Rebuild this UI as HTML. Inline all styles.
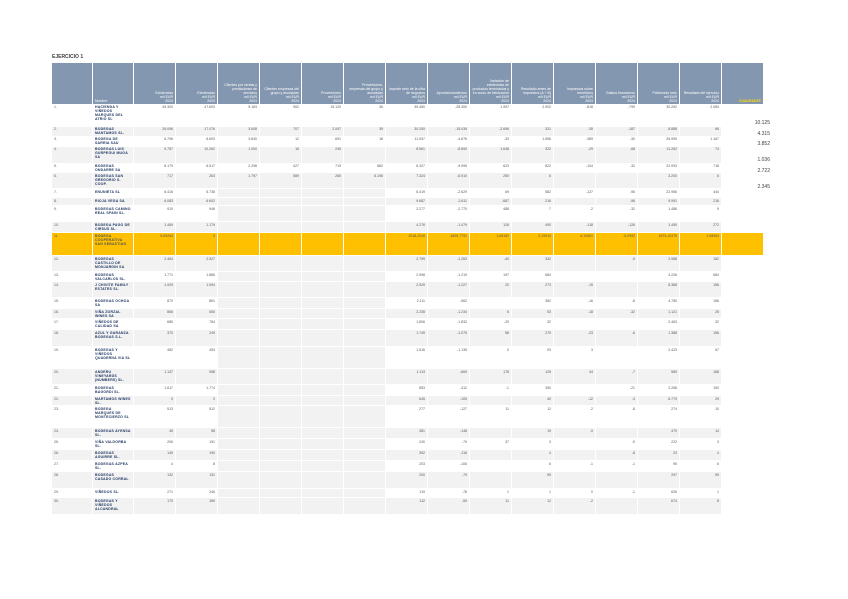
<!DOCTYPE html>
<html><head><meta charset="utf-8">
<style>
body{margin:0;background:#fff;width:848px;height:599px;overflow:hidden;position:relative;font-family:"Liberation Sans",sans-serif}
.t{position:absolute;left:52px;top:54px;font-size:5px;font-weight:bold;color:#404040}
table{position:absolute;left:51px;top:62px;border-collapse:collapse;table-layout:fixed;width:712px}
td,th{border:1px solid #fff;padding:0.5px 2px 0 2px;overflow:hidden;font-size:3.5px;line-height:4.1px;vertical-align:top;text-align:right;color:#595959;white-space:nowrap}
th{background:#8497b0;color:#fff;height:40px;vertical-align:bottom;font-weight:normal;white-space:normal;text-align:right;padding-bottom:0}
th.c{color:#ffd700;font-weight:bold}
td.n{text-align:left;color:#1f3864;font-weight:bold;white-space:normal;letter-spacing:.2px}
td.i{text-align:left}
tr.s td{background:#f2f2f2}
td.g{background:#f2f2f2}
tr.h td{background:#ffc000;color:#555}
tr.h td.n{color:#555}
.r{position:absolute;left:752px;font-size:5px;color:#404040;width:18px;text-align:right}
</style></head><body>
<div class="t">EJERCICIO 1</div>
<table>
<colgroup><col style="width:41px"><col style="width:41px"><col span="14" style="width:42px"><col style="width:42px"></colgroup>
<tr><th></th><th style="text-align:left">Nombre</th><th>Existencias<br>mil EUR<br>2024</th><th>Existencias<br>mil EUR<br>2023</th><th>Clientes por ventas y prestaciones de servicios<br>mil EUR<br>2024</th><th>Clientes empresas del grupo y asociadas<br>mil EUR<br>2024</th><th>Proveedores<br>mil EUR<br>2024</th><th>Proveedores, empresas del grupo y asociadas<br>mil EUR<br>2024</th><th>Importe neto de la cifra de negocios<br>mil EUR<br>2024</th><th>Aprovisionamientos<br>mil EUR<br>2024</th><th>Variación de existencias de productos terminados y en curso de fabricación<br>mil EUR<br>2024</th><th>Resultado antes de impuestos (A + B)<br>mil EUR<br>2024</th><th>Impuestos sobre beneficios<br>mil EUR<br>2024</th><th>Gastos financieros<br>mil EUR<br>2024</th><th>Patrimonio neto<br>mil EUR<br>2024</th><th>Resultado del ejercicio<br>mil EUR<br>2024</th><th class="c">CUADRANTE</th></tr>
<tr style="height:22px"><td class="i">1.</td><td class="n">HACIENDA Y VIÑEDOS MARQUES DEL ATRIO SL</td><td>49.300</td><td>47.603</td><td>9.163</td><td>962</td><td>15.120</td><td>36</td><td>39.460</td><td>-28.300</td><td>1.997</td><td>2.902</td><td>-818</td><td>-799</td><td>30.262</td><td>2.084</td><td></td></tr>
<tr class="s" style="height:10px"><td class="i">2.</td><td class="n">BODEGAS MANTAMOS SL.</td><td>26.096</td><td>17.076</td><td>3.608</td><td>707</td><td>2.097</td><td>39</td><td>30.200</td><td>-15.039</td><td>-2.696</td><td>321</td><td>-35</td><td>-187</td><td>8.888</td><td>66</td><td style="background:#fff"></td></tr>
<tr style="height:10px"><td class="i">3.</td><td class="n">BODEGA DE SARRIA SAU</td><td>6.796</td><td>6.603</td><td>3.840</td><td>12</td><td>691</td><td>18</td><td>11.097</td><td>-4.676</td><td>-33</td><td>1.556</td><td>-389</td><td>-30</td><td>26.990</td><td>1.167</td><td></td></tr>
<tr class="s" style="height:17px"><td class="i">4.</td><td class="n">BODEGAS LUIS GURPEGUI MUGA SA</td><td>9.757</td><td>10.262</td><td>1.000</td><td>16</td><td>245</td><td></td><td>8.561</td><td>-8.890</td><td>1.648</td><td>322</td><td>-29</td><td>-68</td><td>11.262</td><td>74</td><td style="background:#fff"></td></tr>
<tr style="height:9px"><td class="i">5.</td><td class="n">BODEGAS ONDARRE SA</td><td>8.179</td><td>6.517</td><td>2.298</td><td>427</td><td>719</td><td>882</td><td>6.327</td><td>-9.995</td><td>623</td><td>822</td><td>-104</td><td>-32</td><td>22.093</td><td>718</td><td></td></tr>
<tr class="s" style="height:16px"><td class="i">6.</td><td class="n">BODEGAS SAN GREGORIO S. COOP.</td><td>717</td><td>263</td><td>1.797</td><td>589</td><td>265</td><td>6.196</td><td>7.324</td><td>-6.910</td><td>250</td><td>6</td><td></td><td></td><td>3.200</td><td>6</td><td style="background:#fff"></td></tr>
<tr style="height:9px"><td class="i">7.</td><td class="n">ENUNIETA SL</td><td>6.416</td><td>5.738</td><td class="g"></td><td class="g"></td><td class="g"></td><td class="g"></td><td>6.419</td><td>-2.629</td><td>69</td><td>582</td><td>-127</td><td>-96</td><td>22.956</td><td>444</td><td></td></tr>
<tr class="s" style="height:8px"><td class="i">8.</td><td class="n">RIOJA VEGA SA</td><td>6.083</td><td>6.602</td><td></td><td></td><td></td><td></td><td>9.687</td><td>-2.611</td><td>-687</td><td>216</td><td></td><td>-96</td><td>9.991</td><td>216</td><td style="background:#fff"></td></tr>
<tr style="height:16px"><td class="i">9.</td><td class="n">BODEGAS CAMINO REAL SPAIN SL.</td><td>910</td><td>946</td><td class="g"></td><td class="g"></td><td class="g"></td><td class="g"></td><td>2.277</td><td>-2.770</td><td>488</td><td>7</td><td>-2</td><td>-32</td><td>1.486</td><td>9</td><td></td></tr>
<tr class="s" style="height:11px"><td class="i">10.</td><td class="n">BODEGA PAGO DE CIRSUS SL.</td><td>1.469</td><td>1.179</td><td></td><td></td><td></td><td></td><td>4.276</td><td>-1.479</td><td>126</td><td>490</td><td>-118</td><td>-126</td><td>1.490</td><td>272</td><td style="background:#fff"></td></tr>
<tr class="h" style="height:23px"><td class="i">11.</td><td class="n">BODEGA COOPERATIVA SAN SEBASTIAN</td><td>6,95264</td><td>0</td><td></td><td></td><td></td><td></td><td>2018,2049</td><td>-1899,7791</td><td>1,66182</td><td>2,19919</td><td>6,10561</td><td>-0,0992</td><td>1879,10378</td><td>1,98954</td><td></td></tr>
<tr class="s" style="height:16px"><td class="i">12.</td><td class="n">BODEGAS CASTILLO DE MONJARDIN SA</td><td>2.464</td><td>2.527</td><td></td><td></td><td></td><td></td><td>2.799</td><td>-1.263</td><td>-40</td><td>332</td><td></td><td>-9</td><td>2.988</td><td>182</td><td style="background:#fff"></td></tr>
<tr style="height:10px"><td class="i">13.</td><td class="n">BODEGAS VALCARLOS SL.</td><td>1.771</td><td>1.886</td><td class="g"></td><td class="g"></td><td class="g"></td><td class="g"></td><td>2.598</td><td>-1.219</td><td>197</td><td>684</td><td></td><td></td><td>4.226</td><td>684</td><td></td></tr>
<tr class="s" style="height:16px"><td class="i">14.</td><td class="n">J CHIVITE FAMILY ESTATES SL.</td><td>1.929</td><td>1.994</td><td></td><td></td><td></td><td></td><td>2.529</td><td>-1.227</td><td>20</td><td>273</td><td>-15</td><td></td><td>8.368</td><td>156</td><td style="background:#fff"></td></tr>
<tr style="height:11px"><td class="i">15.</td><td class="n">BODEGAS OCHOA SA</td><td>870</td><td>861</td><td class="g"></td><td class="g"></td><td class="g"></td><td class="g"></td><td>2.111</td><td>-962</td><td></td><td>382</td><td>-16</td><td>-8</td><td>4.780</td><td>166</td><td></td></tr>
<tr class="s" style="height:10px"><td class="i">16.</td><td class="n">VIÑA ZORZAL WINES SA</td><td>866</td><td>650</td><td></td><td></td><td></td><td></td><td>2.235</td><td>-1.234</td><td>6</td><td>53</td><td>-18</td><td>-32</td><td>1.121</td><td>25</td><td style="background:#fff"></td></tr>
<tr style="height:11px"><td class="i">17.</td><td class="n">VIÑEDOS DE CALIDAD SA</td><td>685</td><td>784</td><td class="g"></td><td class="g"></td><td class="g"></td><td class="g"></td><td>1.806</td><td>-1.832</td><td>-29</td><td>32</td><td></td><td></td><td>2.463</td><td>32</td><td></td></tr>
<tr class="s" style="height:17px"><td class="i">18.</td><td class="n">AZUL Y GARANZA BODEGAS S.L.</td><td>370</td><td>249</td><td></td><td></td><td></td><td></td><td>1.749</td><td>-1.075</td><td>58</td><td>279</td><td>-23</td><td>-6</td><td>1.388</td><td>156</td><td style="background:#fff"></td></tr>
<tr style="height:22px"><td class="i">19.</td><td class="n">BODEGAS Y VIÑEDOS QUADERNA VIA SL</td><td>482</td><td>453</td><td class="g"></td><td class="g"></td><td class="g"></td><td class="g"></td><td>1.516</td><td>-1.135</td><td>0</td><td>53</td><td>3</td><td></td><td>2.423</td><td>57</td><td></td></tr>
<tr class="s" style="height:16px"><td class="i">20.</td><td class="n">ANDERU VINEYARDS (NUMBERS) SL.</td><td>1.137</td><td>958</td><td></td><td></td><td></td><td></td><td>1.113</td><td>-669</td><td>178</td><td>125</td><td>44</td><td>-7</td><td>589</td><td>168</td><td style="background:#fff"></td></tr>
<tr style="height:11px"><td class="i">21.</td><td class="n">BODEGAS BAGORDI SL.</td><td>1.617</td><td>1.774</td><td class="g"></td><td class="g"></td><td class="g"></td><td class="g"></td><td>853</td><td>-412</td><td>-1</td><td>350</td><td></td><td>-21</td><td>2.268</td><td>150</td><td></td></tr>
<tr class="s" style="height:10px"><td class="i">22.</td><td class="n">MARTAMOS WINES SL.</td><td>0</td><td>0</td><td></td><td></td><td></td><td></td><td>645</td><td>-105</td><td></td><td>40</td><td>-12</td><td>-3</td><td>6.779</td><td>29</td><td style="background:#fff"></td></tr>
<tr style="height:22px"><td class="i">23.</td><td class="n">BODEGA MARQUES DE MONTECIERZO SL</td><td>513</td><td>512</td><td class="g"></td><td class="g"></td><td class="g"></td><td class="g"></td><td>277</td><td>-127</td><td>11</td><td>12</td><td>-2</td><td>-8</td><td>274</td><td>10</td><td></td></tr>
<tr class="s" style="height:11px"><td class="i">24.</td><td class="n">BODEGAS AYENSA SL.</td><td>45</td><td>58</td><td></td><td></td><td></td><td></td><td>381</td><td>-148</td><td></td><td>19</td><td>-9</td><td></td><td>470</td><td>14</td><td style="background:#fff"></td></tr>
<tr style="height:11px"><td class="i">25.</td><td class="n">VIÑA VALDORBA SL.</td><td>206</td><td>191</td><td class="g"></td><td class="g"></td><td class="g"></td><td class="g"></td><td>240</td><td>-79</td><td>37</td><td>3</td><td></td><td>-9</td><td>222</td><td>3</td><td></td></tr>
<tr class="s" style="height:11px"><td class="i">26.</td><td class="n">BODEGAS AGUIRRE SL.</td><td>149</td><td>190</td><td></td><td></td><td></td><td></td><td>392</td><td>-116</td><td></td><td>4</td><td></td><td>-8</td><td>23</td><td>4</td><td style="background:#fff"></td></tr>
<tr style="height:11px"><td class="i">27.</td><td class="n">BODEGAS AZPEA SL.</td><td>4</td><td>8</td><td class="g"></td><td class="g"></td><td class="g"></td><td class="g"></td><td>203</td><td>-106</td><td></td><td>6</td><td>-1</td><td>-1</td><td>95</td><td>6</td><td></td></tr>
<tr class="s" style="height:17px"><td class="i">28.</td><td class="n">BODEGAS CASADO CORRAL</td><td>132</td><td>131</td><td></td><td></td><td></td><td></td><td>200</td><td>-79</td><td></td><td>59</td><td></td><td></td><td>297</td><td>59</td><td style="background:#fff"></td></tr>
<tr style="height:9px"><td class="i">29.</td><td class="n">VIÑEDOS SL.</td><td>271</td><td>246</td><td class="g"></td><td class="g"></td><td class="g"></td><td class="g"></td><td>119</td><td>-78</td><td>1</td><td>1</td><td>0</td><td>-1</td><td>626</td><td>1</td><td></td></tr>
<tr class="s" style="height:17px"><td class="i">30.</td><td class="n">BODEGAS Y VIÑEDOS ALCANDRAL</td><td>170</td><td>189</td><td></td><td></td><td></td><td></td><td>112</td><td>-59</td><td>11</td><td>12</td><td>-2</td><td></td><td>674</td><td>8</td><td style="background:#fff"></td></tr>
</table>
<div class="r" style="top:120px">10.125</div>
<div class="r" style="top:131px">4.315</div>
<div class="r" style="top:141px">3.852</div>
<div class="r" style="top:157px">1.036</div>
<div class="r" style="top:168px">2.722</div>
<div class="r" style="top:184px">2.345</div>
</body></html>
